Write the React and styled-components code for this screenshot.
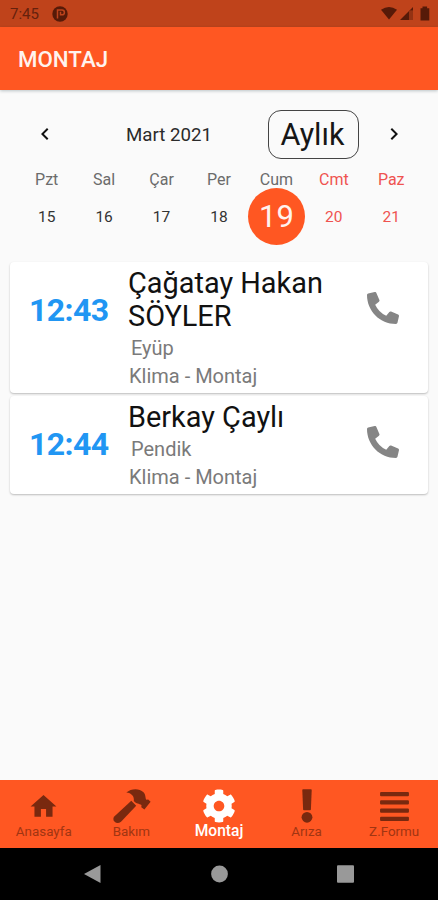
import React from "react";
import styled, { createGlobalStyle } from "styled-components";
import { FaAlignJustify, FaCog, FaPhoneAlt } from "react-icons/fa";
import { MdChevronLeft, MdChevronRight, MdHome } from "react-icons/md";

const HammerIcon = () => (
  <svg width="39" height="36" viewBox="0 0 39 36" fill="currentColor">
    <path d="M14.300 4.600C19 .5 27 0 31.500 4.200C34 6.800 33 9.500 34.300 11.800L36.200 11.600L38.600 13.800L32.400 21.500L29.300 19.300L29.500 17C27 15.500 24.500 16 21.800 13C22.500 8.500 19.500 5 14.300 4.600Z" />
    <path d="M19.300 12.800L24.200 17.800L9 33.700C4.800 37 -.5 33 2 28.700Z" />
  </svg>
);

const ExclamationIcon = () => (
  <svg width="12" height="34" viewBox="0 0 12 34" fill="currentColor">
    <path d="M1.300 1Q1.300 .3 2 .3H10Q10.700 .3 10.700 1L9.900 20.500Q9.800 21.300 9.100 21.300H2.900Q2.200 21.300 2.100 20.500Z" />
    <circle cx="6" cy="28.300" r="5.400" />
  </svg>
);

const days = [
  { name: "Pzt", date: 15 },
  { name: "Sal", date: 16 },
  { name: "Çar", date: 17 },
  { name: "Per", date: 18 },
  { name: "Cum", date: 19, selected: true },
  { name: "Cmt", date: 20, weekend: true },
  { name: "Paz", date: 21, weekend: true }
];

const jobs = [
  {
    time: "12:43",
    customer: "Çağatay Hakan SÖYLER",
    district: "Eyüp",
    type: "Klima - Montaj"
  },
  {
    time: "12:44",
    customer: "Berkay Çaylı",
    district: "Pendik",
    type: "Klima - Montaj"
  }
];

const tabs = [
  { label: "Anasayfa", icon: <MdHome size={31} /> },
  { label: "Bakım", icon: <HammerIcon /> },
  { label: "Montaj", icon: <FaCog size={34} />, active: true },
  { label: "Arıza", icon: <ExclamationIcon /> },
  { label: "Z.Formu", icon: <FaAlignJustify size={33} /> }
];

const StatusIcons = () => (
  <svg width="50" height="16" viewBox="0 0 50 16" fill="#561a08">
    <path d="M0 3.8Q8 -2 16 3.8L8 13.5Z" />
    <path d="M19 14L32 1v3.500h-4V14z" />
    <path d="M28 14V4.500h4V14z" opacity="0.4" />
    <path d="M39.5 2.2h2V.6h4.6v1.6h2.2V14.4h-8.8z" />
  </svg>
);

const AppBadge = () => (
  <svg width="16" height="16" viewBox="0 0 16 16">
    <circle cx="8" cy="8" r="7.7" fill="#561a08" />
    <path
      d="M5.500 12.500V4h4.500a2.400 2.400 0 0 1 0 4.800H8.500V5.800"
      fill="none"
      stroke="#bd431c"
      strokeWidth="1.5"
    />
  </svg>
);

const App = () => {
  return (
    <>
      <GlobalStyle />
      <Screen>
        <StatusBar>
          <Clock>7:45</Clock>
          <AppBadge />
          <StatusRight>
            <StatusIcons />
          </StatusRight>
        </StatusBar>
        <Header>MONTAJ</Header>
        <Content>
          <MonthRow>
            <Arrow>
              <MdChevronLeft size={24} />
            </Arrow>
            <Month>Mart 2021</Month>
            <FormatButton>Aylık</FormatButton>
            <Arrow>
              <MdChevronRight size={24} />
            </Arrow>
          </MonthRow>
          <Week>
            {days.map(day => (
              <Day key={day.date}>
                <DayName $weekend={day.weekend}>{day.name}</DayName>
                <DayNumber $weekend={day.weekend} $selected={day.selected}>
                  {day.date}
                </DayNumber>
              </Day>
            ))}
          </Week>
          <JobList>
            {jobs.map(job => (
              <JobCard key={job.time}>
                <Time>{job.time}</Time>
                <Details>
                  <Customer>{job.customer}</Customer>
                  <Detail $indent>{job.district}</Detail>
                  <Detail>{job.type}</Detail>
                </Details>
                <CallButton aria-label="Ara">
                  <FaPhoneAlt size={32} />
                </CallButton>
              </JobCard>
            ))}
          </JobList>
        </Content>
        <TabBar>
          {tabs.map(({ label, icon, active }) => (
            <Tab key={label} $active={active}>
              <TabIcon>{icon}</TabIcon>
              <TabLabel $active={active}>{label}</TabLabel>
            </Tab>
          ))}
        </TabBar>
        <SystemBar>
          <svg width="17" height="18" viewBox="0 0 17 18">
            <path d="M0 9L16.5 0v18z" />
          </svg>
          <svg width="17" height="18" viewBox="0 0 17 18">
            <circle cx="8.5" cy="9" r="8.4" />
          </svg>
          <svg width="17" height="18" viewBox="0 0 17 18">
            <rect y="0.3" width="17" height="17.4" rx="1" />
          </svg>
        </SystemBar>
      </Screen>
    </>
  );
};

export default App;

const GlobalStyle = createGlobalStyle`
  * {
    box-sizing: border-box;
  }

  body {
    margin: 0;
    font-family: Roboto, "Liberation Sans", sans-serif;
  }

  svg {
    display: block;
    flex-shrink: 0;
  }

  button {
    padding: 0;
    border: none;
    background: none;
    font-family: inherit;
  }
`;

const Screen = styled.div`
  display: flex;
  flex-direction: column;
  width: 438px;
  height: 900px;
  overflow: hidden;
  background: #fafafa;
`;

const StatusBar = styled.div`
  display: flex;
  align-items: center;
  flex-shrink: 0;
  height: 27px;
  padding: 1px 7px 0 10px;
  background: #bf431b;
`;

const Clock = styled.span`
  width: 42px;
  color: #65210d;
  font-size: 15px;
`;

const StatusRight = styled.div`
  margin-left: auto;
`;

const Header = styled.header`
  display: flex;
  align-items: center;
  flex-shrink: 0;
  height: 63px;
  padding: 1px 18px 0;
  background: #ff5722;
  box-shadow: 0 1px 3px rgba(0, 40, 50, 0.25);
  color: #fff3ef;
  font-size: 22.3px;
  font-weight: 500;
`;

const Content = styled.main`
  flex: 1;
`;

const MonthRow = styled.div`
  display: flex;
  align-items: center;
  margin-top: 19px;
  padding: 0 32px 0 33px;
  height: 50px;
`;

const Arrow = styled.button`
  width: 24px;
  color: #111;
`;

const Month = styled.div`
  flex: 1;
  padding: 1px 0 0 13px;
  color: #2b2b2b;
  font-size: 18.7px;
  text-align: center;
`;

const FormatButton = styled.button`
  width: 91px;
  height: 49px;
  margin-right: 23px;
  padding-right: 2px;
  border: 1px solid #444;
  border-radius: 13px;
  color: #161616;
  font-size: 30.5px;
  line-height: 47px;
`;

const Week = styled.div`
  display: flex;
  margin-top: 10px;
  padding: 0 18px;
`;

const Day = styled.div`
  display: flex;
  flex: 1;
  flex-direction: column;
  align-items: center;
`;

const DayName = styled.span`
  height: 19px;
  color: ${({ $weekend }) => ($weekend ? "#ef5350" : "#6b6b6b")};
  font-size: 16px;
  line-height: 21px;
`;

const DayNumber = styled.span`
  width: 57px;
  height: 57px;
  border-radius: 50%;
  background: ${({ $selected }) => ($selected ? "#ff5722" : "transparent")};
  color: ${({ $weekend, $selected }) =>
    $selected ? "#fff3ef" : $weekend ? "#ef5350" : "#333"};
  font-size: ${({ $selected }) => ($selected ? "31px" : "15.5px")};
  line-height: ${({ $selected }) => ($selected ? "57px" : "58px")};
  text-align: center;
`;

const JobList = styled.div`
  display: flex;
  flex-direction: column;
  gap: 3px;
  padding: 17px 10px 0;
`;

const JobCard = styled.div`
  display: flex;
  align-items: flex-start;
  padding: 5px 29px 3px 19px;
  border-radius: 4px;
  background: #fff;
  box-shadow: 0 1px 2px rgba(0, 0, 0, 0.25);
`;

const Time = styled.div`
  width: 99px;
  padding-top: 25px;
  color: #2196f3;
  font-size: 32px;
  font-weight: 700;
  letter-spacing: -0.6px;
  line-height: 37px;
`;

const Details = styled.div`
  flex: 1;
`;

const Customer = styled.div`
  width: 220px;
  margin-bottom: 1px;
  color: #111;
  font-size: 28.9px;
  line-height: 33px;
`;

const Detail = styled.div`
  padding-left: ${({ $indent }) => ($indent ? "3px" : "1px")};
  color: #7a7a7a;
  font-size: 20px;
  line-height: 28px;
`;

const CallButton = styled.button`
  margin-top: 25px;
  color: #858585;
`;

const TabBar = styled.nav`
  display: flex;
  flex-shrink: 0;
  height: 68px;
  background: #ff5722;
`;

const Tab = styled.div`
  display: flex;
  flex: 1;
  flex-direction: column;
  align-items: center;
  color: ${({ $active }) => ($active ? "#fff" : "#79290f")};
`;

const TabIcon = styled.div`
  display: flex;
  align-items: center;
  height: 43px;
  padding-top: 9px;
`;

const TabLabel = styled.span`
  color: ${({ $active }) => ($active ? "#fff" : "#a13512")};
  font-size: ${({ $active }) => ($active ? "15.6px" : "13.4px")};
  font-weight: ${({ $active }) => ($active ? 500 : 400)};
  line-height: ${({ $active }) => ($active ? "17px" : "18px")};
`;

const SystemBar = styled.div`
  display: flex;
  align-items: center;
  justify-content: space-between;
  flex-shrink: 0;
  height: 52px;
  padding: 0 84px;
  background: #000;
  fill: #999;
`;
